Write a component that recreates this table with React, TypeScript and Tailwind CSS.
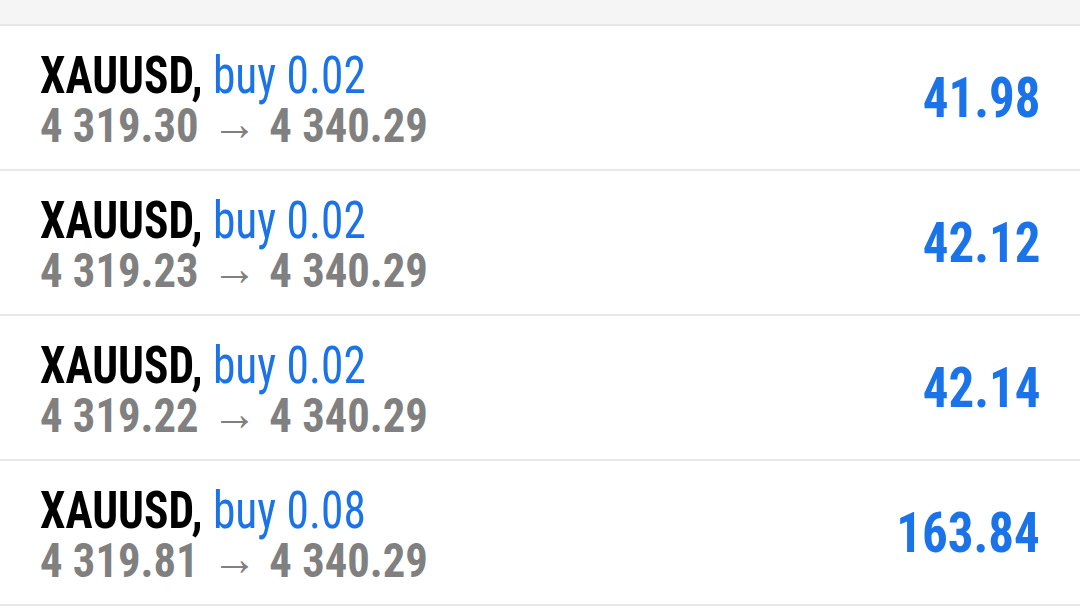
const trades = [
  { symbol: 'XAUUSD', side: 'buy', volume: '0.02', open: '4 319.30', close: '4 340.29', profit: '41.98' },
  { symbol: 'XAUUSD', side: 'buy', volume: '0.02', open: '4 319.23', close: '4 340.29', profit: '42.12' },
  { symbol: 'XAUUSD', side: 'buy', volume: '0.02', open: '4 319.22', close: '4 340.29', profit: '42.14' },
  { symbol: 'XAUUSD', side: 'buy', volume: '0.08', open: '4 319.81', close: '4 340.29', profit: '163.84' },
];

export default function App() {
  return (
    <div className="w-[1080px] h-[608px] overflow-hidden bg-white font-['Roboto',sans-serif] font-stretch-[75%]">
      {/* header strip */}
      <div className="h-[26px] bg-[#f5f5f5] border-b-2 border-[#e8e8e8]" />

      {trades.map((t, i) => (
        <div key={i} className="h-[145px] flex items-center justify-between pl-10 pr-10 border-b-2 border-[#e8e8e8]">
          <div className="flex flex-col pt-[6px]">
            {/* even condensed Roboto is a touch wider than the screenshot */}
            <div className="text-[51px] leading-[50px] whitespace-nowrap origin-left [transform:scaleX(0.89)]">
              <span className="font-bold text-black">{t.symbol},</span>{' '}
              <span className="text-[#1a73e8]">{t.side} {t.volume}</span>
            </div>
            <div className="flex items-center text-[48px] leading-[50px] font-bold text-[#808080] whitespace-nowrap origin-left [transform:scaleX(0.93)]">
              <span>{t.open}</span>
              <span className="font-medium text-[49px] leading-[40px] ml-[14px] mr-[13px] -mt-1">→</span>
              <span>{t.close}</span>
            </div>
          </div>
          <div className="text-[56px] font-bold text-[#1a73e8] origin-right [transform:scaleX(0.91)]">{t.profit}</div>
        </div>
      ))}
    </div>
  );
}
